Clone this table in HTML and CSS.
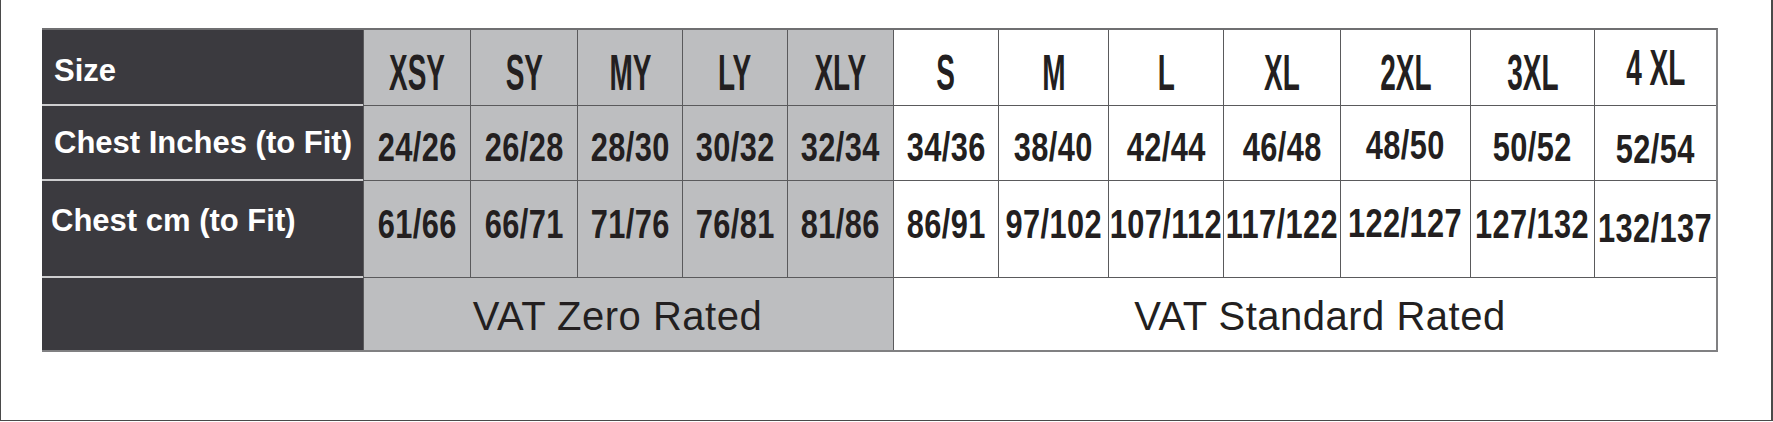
FILE: index.html
```html
<!DOCTYPE html>
<html lang="en">
<head>
<meta charset="utf-8">
<title>Size Chart</title>
<link rel="stylesheet" href="styles.css">
</head>
<body>
<div class="frame">
  <div class="chart">
    <div class="cell lab r1"><span>Size</span></div>
    <div class="cell zero hd"><span class="t">XSY</span></div>
    <div class="cell zero hd"><span class="t">SY</span></div>
    <div class="cell zero hd"><span class="t">MY</span></div>
    <div class="cell zero hd"><span class="t">LY</span></div>
    <div class="cell zero hd"><span class="t">XLY</span></div>
    <div class="cell std hd"><span class="t">S</span></div>
    <div class="cell std hd"><span class="t">M</span></div>
    <div class="cell std hd"><span class="t">L</span></div>
    <div class="cell std hd"><span class="t">XL</span></div>
    <div class="cell std hd"><span class="t">2XL</span></div>
    <div class="cell std hd"><span class="t">3XL</span></div>
    <div class="cell std hd up"><span class="t">4 XL</span></div>

    <div class="cell lab r2"><span>Chest Inches (to Fit)</span></div>
    <div class="cell zero n2"><span class="t">24/26</span></div>
    <div class="cell zero n2"><span class="t">26/28</span></div>
    <div class="cell zero n2"><span class="t">28/30</span></div>
    <div class="cell zero n2"><span class="t">30/32</span></div>
    <div class="cell zero n2"><span class="t">32/34</span></div>
    <div class="cell std n2"><span class="t">34/36</span></div>
    <div class="cell std n2"><span class="t">38/40</span></div>
    <div class="cell std n2"><span class="t">42/44</span></div>
    <div class="cell std n2"><span class="t">46/48</span></div>
    <div class="cell std n2 up"><span class="t">48/50</span></div>
    <div class="cell std n2"><span class="t">50/52</span></div>
    <div class="cell std n2 down"><span class="t">52/54</span></div>

    <div class="cell lab r3"><span>Chest cm (to Fit)</span></div>
    <div class="cell zero n3"><span class="t">61/66</span></div>
    <div class="cell zero n3"><span class="t">66/71</span></div>
    <div class="cell zero n3"><span class="t">71/76</span></div>
    <div class="cell zero n3"><span class="t">76/81</span></div>
    <div class="cell zero n3"><span class="t">81/86</span></div>
    <div class="cell std n3"><span class="t">86/91</span></div>
    <div class="cell std n3"><span class="t">97/102</span></div>
    <div class="cell std n3"><span class="t">107/112</span></div>
    <div class="cell std n3"><span class="t">117/122</span></div>
    <div class="cell std n3 up"><span class="t">122/127</span></div>
    <div class="cell std n3"><span class="t">127/132</span></div>
    <div class="cell std n3 down"><span class="t">132/137</span></div>

    <div class="cell lab r4"></div>
    <div class="cell zero vat vat-zero"><span>VAT Zero Rated</span></div>
    <div class="cell std vat vat-std"><span>VAT Standard Rated</span></div>
  </div>
</div>
</body>
</html>
```

FILE: styles.css
```css
html, body {
  margin: 0;
  padding: 0;
  background: #ffffff;
}

.frame {
  width: 1773px;
  height: 421px;
  box-sizing: border-box;
  border-left: 1px solid #4a4a4a;
  border-right: 2px solid #4a4a4a;
  border-bottom: 1px solid #4a4a4a;
  padding: 28px 0 0 41px;
}

.chart {
  display: grid;
  width: max-content;
  grid-template-columns: 321px 107px 107px 105px 105px 106px 105px 110px 115px 117px 130px 124px 122px;
  grid-template-rows: 76px 75px 97px 72px;
  border-top: 2px solid #6f6f71;
  border-right: 2px solid #808082;
  border-bottom: 2px solid #808082;
  font-family: "Liberation Sans", Arial, sans-serif;
  color: #231f20;
}

.cell {
  box-sizing: border-box;
  display: flex;
  align-items: center;
  justify-content: center;
  overflow: visible;
  white-space: nowrap;
}

.zero {
  background: #bdbec0;
  border-left: 1px solid #5a5a5c;
  border-bottom: 1px solid #5a5a5c;
}

.std {
  background: #ffffff;
  border-left: 1px solid #5a5a5c;
  border-bottom: 1px solid #5a5a5c;
}

.lab {
  background: #3b3a3f;
  color: #ffffff;
  font-weight: 700;
  font-size: 31px;
  line-height: 1;
  justify-content: flex-start;
  padding-left: 12px;
  border-bottom: 2px solid #cdcdcf;
}

.lab.r1 { padding-top: 6px; }
.lab.r3 { padding-left: 9px; padding-bottom: 17px; }
.lab.r4 { border-bottom: none; }

.t {
  display: inline-block;
  font-weight: 700;
  line-height: 1;
}

.hd .t {
  font-size: 50px;
  transform: scaleX(0.56);
}
.hd { padding-top: 10px; }
.hd.up { padding-top: 0; }

.n2 .t, .n3 .t {
  font-size: 40px;
  transform: scaleX(0.77);
  letter-spacing: 0.5px;
}
.n2 { padding-top: 8px; }
.n2.up { padding-top: 4px; }
.n2.down { padding-top: 12px; }

.n3 { padding-bottom: 10px; }
.n3.up { padding-bottom: 12px; }
.n3.down { padding-bottom: 2px; }

.vat {
  grid-row: 4;
  border-bottom: none;
  font-size: 40px;
  font-weight: 400;
  letter-spacing: 0.5px;
  line-height: 1;
  padding-top: 4px;
}
.vat-zero { grid-column: 2 / 7; padding-right: 22px; }
.vat-std { grid-column: 7 / 14; padding-left: 30px; }
```
